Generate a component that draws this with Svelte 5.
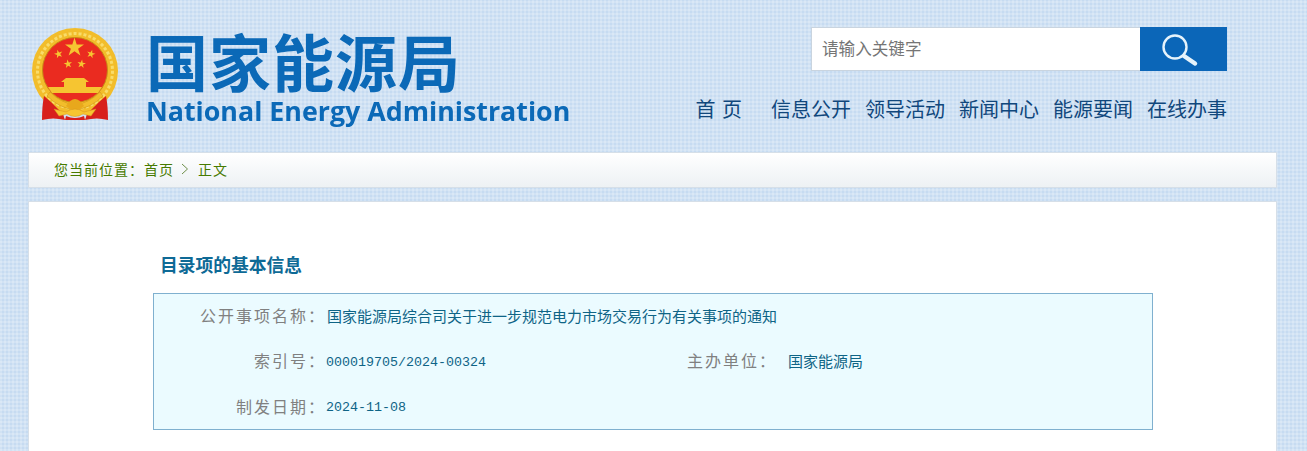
<script>
  const nav = ["信息公开", "领导活动", "新闻中心", "能源要闻", "在线办事"];

  // five-pointed star as polygon points, for the emblem
  function star(cx, cy, r, rot = 0) {
    const pts = [];
    for (let i = 0; i < 10; i++) {
      const a = ((i * 36 + rot - 90) * Math.PI) / 180;
      const d = i % 2 ? r * 0.38 : r;
      pts.push((cx + d * Math.cos(a)).toFixed(1) + "," + (cy + d * Math.sin(a)).toFixed(1));
    }
    return pts.join(" ");
  }

  const stars = [
    [29.5, 28, 4.5, -15],
    [62, 28, 4.5, 15],
    [39, 38, 4.5, -8],
    [52.500, 38, 4.5, 8],
  ];
</script>

<div class="page">
  <header class="top">
    <div class="brand">
      <svg class="emblem" viewBox="0 0 90 96" width="90" height="96" aria-hidden="true">
        <circle cx="46" cy="45" r="43" fill="#f2bd2b" />
        <circle cx="46" cy="45" r="37.500" fill="none" stroke="#f9dc6a" stroke-width="3" stroke-dasharray="3 2" />
        <circle cx="46" cy="44" r="32.500" fill="#ea2b20" stroke="#c98c15" stroke-width="1" />
        <g fill="#f6c531">
          <polygon points={star(45.5, 21.5, 10)} />
          {#each stars as s}
            <polygon points={star(s[0], s[1], s[2], s[3])} />
          {/each}
          <path d="M37 52 L55 52 L60 56 L57 56 L57 61 L35 61 L35 56 L32 56 Z" />
          <path d="M19 61 H73 L69 67 H23 Z" />
        </g>
        <path d="M15 70 L22 76 Q30 84 34 88 L36 94 Q24 91 13 94 Q13 80 15 70 Z" fill="#d8201c" />
        <path d="M77 70 L70 76 Q62 84 58 88 L56 94 Q68 91 79 94 Q79 80 77 70 Z" fill="#d8201c" />
        <path d="M18 70 Q30 82 46 84 Q62 82 74 70 L71 66 Q60 77 46 79 Q32 77 21 66 Z" fill="#f2bd2b" stroke="#c98c15" stroke-width=".5" />
        <path d="M37 80 Q46 66 55 80 Q50 84 46 84 Q42 84 37 80 Z" fill="#e8a81c" />
        <path d="M25 83 L37 86 Q46 80 55 86 L67 83 L62 90 L54 88 Q46 93 38 88 L30 90 Z" fill="#f6c531" stroke="#d8901a" stroke-width=".5" />
        <path d="M37 90 Q46 94 55 90 L56 94 H36 Z" fill="#d8201c" />
      </svg>
      <div class="wordmark">
        <div class="cn">国家能源局</div>
        <div class="en">National Energy Administration</div>
      </div>
    </div>
    <div class="tools">
      <form class="search">
        <input type="text" placeholder="请输入关键字" />
        <button type="button" aria-label="搜索">
          <svg viewBox="0 0 87 44" width="87" height="44" aria-hidden="true">
            <circle cx="35" cy="20" r="11.500" fill="none" stroke="#e6f3fb" stroke-width="2.400" />
            <line x1="44" y1="29" x2="55" y2="36.500" stroke="#e6f3fb" stroke-width="4.500" stroke-linecap="round" />
          </svg>
        </button>
      </form>
      <nav class="nav">
        <a class="home" href="#top">首 页</a>
        {#each nav as item}
          <a href="#top">{item}</a>
        {/each}
      </nav>
    </div>
  </header>

  <div class="crumb">
    <span>您当前位置：首页</span><svg class="sep" viewBox="0 0 8 12" width="8" height="12" aria-hidden="true"><path d="M1 1 L6.500 6 L1 11" fill="none" stroke="#6f8f4a" /></svg><span>正文</span>
  </div>

  <main class="card">
    <h2>目录项的基本信息</h2>
    <div class="info">
      <div class="label">公开事项名称：</div>
      <div class="value wide">国家能源局综合司关于进一步规范电力市场交易行为有关事项的通知</div>
      <div class="label">索引号：</div>
      <div class="value num">000019705/2024-00324</div>
      <div class="label">主办单位：</div>
      <div class="value org">国家能源局</div>
      <div class="label">制发日期：</div>
      <div class="value num wide">2024-11-08</div>
    </div>
  </main>
</div>

<style>
  :global(body) {
    margin: 0;
    background-color: #c6dbf1;
    background-image:
      repeating-linear-gradient(0deg, rgba(255, 255, 255, 0.2) 0 2px, transparent 2px 4px),
      repeating-linear-gradient(90deg, rgba(255, 255, 255, 0.2) 0 2px, transparent 2px 4px);
    font-family: "Noto Sans CJK SC", "Liberation Sans", sans-serif;
  }

  .page {
    box-sizing: border-box;
    width: 1249px;
    height: 451px;
    margin-left: 28px;
    overflow: hidden;
  }

  .top {
    display: flex;
    justify-content: space-between;
    height: 152px;
  }

  .brand {
    display: flex;
    align-items: flex-start;
    filter: blur(0.4px);
  }

  .emblem {
    flex: none;
    margin: 26px 27px 0 1px;
  }

  .wordmark {
    margin-top: 24px;
    color: #0b69b7;
    white-space: nowrap;
  }

  .cn {
    font-size: 62px;
    font-weight: 700;
    letter-spacing: 1px;
    line-height: 72px;
    height: 72px;
  }

  .en {
    font-family: "Open Sans", "Liberation Sans", sans-serif;
    font-size: 26.800px;
    font-weight: 700;
    line-height: 30px;
  }

  .tools {
    flex: none;
    width: 532px;
    margin-right: 50px;
    display: flex;
    flex-direction: column;
    align-items: flex-end;
    padding-top: 27px;
  }

  .search {
    display: flex;
    width: 416px;
    height: 44px;
    margin: 0;
  }

  .search input {
    box-sizing: border-box;
    flex: 1;
    min-width: 0;
    height: 44px;
    border: 1px solid #c9d4df;
    border-right: 0;
    padding: 0 0 2px 10px;
    background: #fff;
    font-family: inherit;
    font-size: 16.600px;
    outline: none;
  }

  .search input::placeholder {
    color: #757575;
    opacity: 1;
  }

  .search button {
    width: 87px;
    height: 44px;
    padding: 0;
    border: 0;
    background: #0b66b8;
    line-height: 0;
  }

  .nav {
    display: flex;
    gap: 14px;
    margin-top: 23px;
    font-size: 20px;
    line-height: 30px;
    white-space: nowrap;
  }

  .nav a {
    color: #10477c;
    text-decoration: none;
  }

  .nav .home {
    margin-right: 15px;
    word-spacing: 2px;
  }

  .crumb {
    box-sizing: border-box;
    display: flex;
    align-items: center;
    height: 36px;
    padding: 0 0 2px 25px;
    border: 1px solid #d6dfe8;
    background: linear-gradient(#fff, #edf1f4);
    color: #477a00;
    font-size: 14px;
    letter-spacing: 1px;
  }

  .sep {
    margin: 0 9px 0 7px;
  }

  .card {
    box-sizing: border-box;
    height: 300px;
    margin-top: 13px;
    padding: 49px 124px 0 124px;
    background: #fff;
    border: 1px solid #d6dfe8;
    border-bottom: 0;
  }

  h2 {
    margin: 0 0 16px 7px;
    color: #0e6a96;
    font-size: 17.750px;
    font-weight: 700;
    line-height: 26px;
  }

  .info {
    box-sizing: border-box;
    display: grid;
    grid-template-columns: 172px 339px 112px 1fr;
    grid-template-rows: 44px 46px 45px;
    align-items: center;
    width: 1000px;
    height: 137px;
    background: #ebfbff;
    border: 1px solid #7fb0cf;
  }

  .label {
    padding-bottom: 2px;
    color: #808080;
    font-size: 16px;
    letter-spacing: 2px;
    text-align: right;
    white-space: nowrap;
  }

  .value {
    padding: 0 0 2px 1px;
    color: #0e6486;
    font-size: 15px;
    white-space: nowrap;
  }

  .wide {
    grid-column: 2 / -1;
  }

  .org {
    padding-left: 11px;
  }

  .num {
    padding: 2px 0 0;
    font-family: "Liberation Mono", monospace;
    font-size: 13.330px;
  }
</style>
